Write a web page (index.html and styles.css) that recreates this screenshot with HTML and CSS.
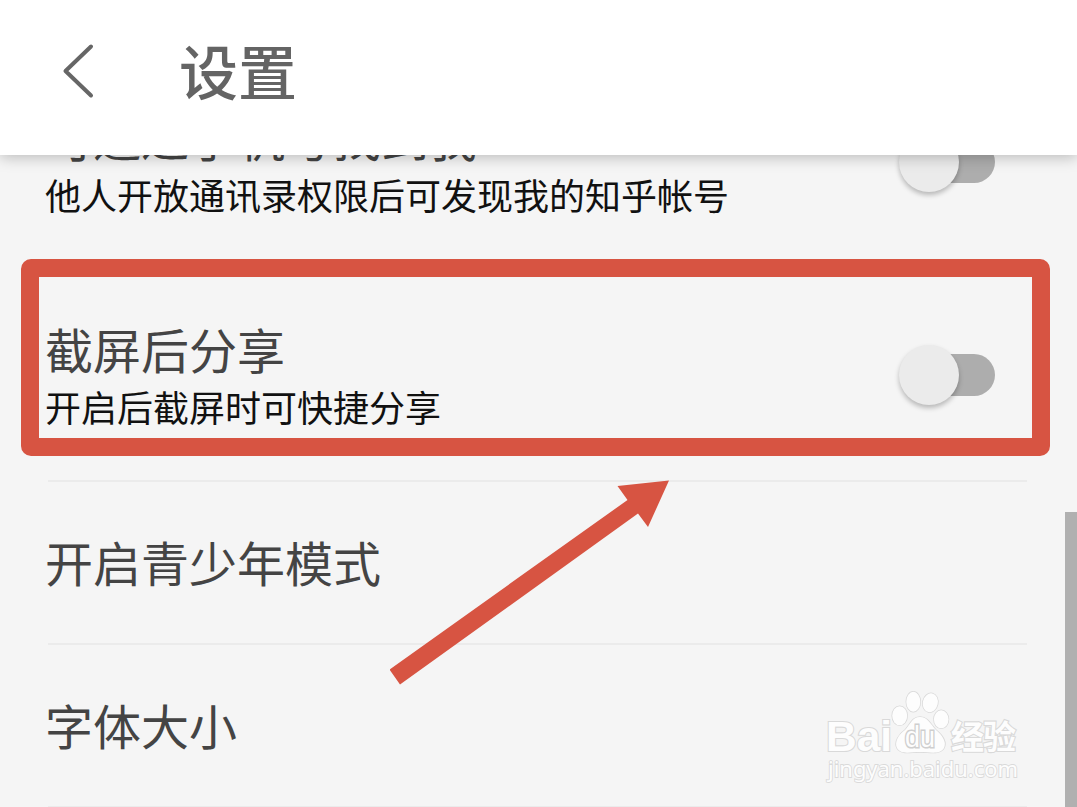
FILE: index.html
```
<!DOCTYPE html>
<html lang="zh-CN">
<head>
    <meta charset="UTF-8">
    <meta name="viewport" content="width=device-width, initial-scale=1.0">
    <title>设置</title>
    <link rel="stylesheet" href="styles.css">
</head>
<body>
    <header class="header">
        <svg class="back" width="32" height="56" viewBox="0 0 32 56">
            <path d="M29 3.500 L3.500 28 L29 52.500" />
        </svg>
        <h1>设置</h1>
    </header>

    <main class="content">
        <ul class="settings">
            <li class="row row-tall">
                <div class="text">
                    <p class="title">可通过手机号找到我</p>
                    <p class="desc">他人开放通讯录权限后可发现我的知乎帐号</p>
                </div>
                <span class="switch"><span class="thumb"></span></span>
            </li>
            <li class="row row-tall">
                <div class="text">
                    <p class="title">截屏后分享</p>
                    <p class="desc">开启后截屏时可快捷分享</p>
                </div>
                <span class="switch"><span class="thumb"></span></span>
            </li>
            <li class="row">
                <p class="title">开启青少年模式</p>
            </li>
            <li class="row">
                <p class="title">字体大小</p>
            </li>
        </ul>
    </main>

    <div class="scrollbar"></div>
    <div class="highlight"></div>

    <svg class="arrow" width="280" height="206" viewBox="0 0 280 206">
        <path d="M-0.500 189.500 L237.500 20 L227.500 6 L279 0.500 L258 47 L248 33.500 L10 204.500 Z" />
    </svg>

    <svg class="watermark" width="210" height="110" viewBox="0 0 210 110">
        <g class="paw">
            <ellipse cx="79.700" cy="35.700" rx="7.500" ry="9.500" />
            <ellipse cx="93.300" cy="21.800" rx="7" ry="10" />
            <ellipse cx="110.300" cy="22.800" rx="7.500" ry="9.500" transform="rotate(12 110.300 22.800)" />
            <ellipse cx="121.200" cy="39.300" rx="7.300" ry="9" />
            <path d="M100 37 C108 37 111 45 116 50 C122 55 127 62 124 68 C120 75 110 72 100 72 C90 72 81 75 77 68 C74 62 79 54 85 50 C90 45 92 37 100 37 Z" />
        </g>
        <text class="brand" x="6" y="71" textLength="66" lengthAdjust="spacingAndGlyphs">Bai</text>
        <text class="du" x="85" y="67" textLength="30" lengthAdjust="spacingAndGlyphs">du</text>
        <text class="brand-cn" x="131" y="69" textLength="65">经验</text>
        <text class="site" x="8" y="97" textLength="190" lengthAdjust="spacingAndGlyphs">jingyan.baidu.com</text>
    </svg>
</body>
</html>
```
FILE: styles.css
```
* {
    box-sizing: border-box;
}
body {
    margin: 0;
    height: 807px;
    display: flex;
    flex-direction: column;
    position: relative;
    overflow: hidden;
    background-color: #f5f5f5;
    font-family: "Noto Sans CJK SC", sans-serif;
}
h1, p, ul {
    margin: 0;
    padding: 0;
}
.header {
    flex: none;
    height: 155px;
    display: flex;
    align-items: flex-start;
    gap: 85px;
    padding: 43px 0 0 62px;
    background-color: #fff;
    box-shadow: 0 2px 14px rgba(0, 0, 0, 0.25);
    z-index: 1;
}
.back {
    fill: none;
    stroke: #666;
    stroke-width: 4;
    stroke-linecap: round;
    stroke-linejoin: round;
}
.header h1 {
    margin-top: -3px;
    font-size: 59px;
    font-weight: 500;
    line-height: 60px;
    color: #646464;
}
.content {
    flex: 1;
    min-height: 0;
}
.settings {
    margin-top: -98px;
    list-style: none;
}
.row {
    height: 163px;
    margin: 0 50px 0 48px;
    padding-bottom: 4px;
    border-bottom: 2px solid #ebebeb;
    display: flex;
    align-items: center;
    justify-content: space-between;
}
.row-tall {
    height: 213px;
    padding-right: 32px;
    padding-bottom: 0;
}
.row-tall:first-child {
    height: 212px;
}
.text {
    padding-bottom: 2px;
}
.title {
    margin-left: -3px;
    font-size: 48px;
    line-height: 64px;
    color: #444;
}
.text .title {
    line-height: 62px;
    margin-bottom: 3px;
}
.desc {
    margin-left: -3px;
    font-size: 36px;
    line-height: 48px;
    color: #111;
}
.switch {
    width: 84px;
    height: 42px;
    border-radius: 21px;
    background-color: #adadad;
    display: flex;
    align-items: center;
}
.thumb {
    flex: none;
    width: 60px;
    height: 60px;
    margin-left: -12px;
    border-radius: 50%;
    background-color: #ebebeb;
    box-shadow: 0 3px 5px rgba(0, 0, 0, 0.25);
}
.scrollbar {
    position: absolute;
    right: 0;
    top: 512px;
    width: 12px;
    height: 295px;
    background-color: #b0b0b0;
}
.highlight {
    position: absolute;
    left: 21px;
    top: 259px;
    width: 1029px;
    height: 197px;
    border: 18px solid #d75442;
    border-radius: 10px;
}
.arrow {
    position: absolute;
    left: 390px;
    top: 480px;
    fill: #d75442;
}
.watermark {
    position: absolute;
    left: 820px;
    top: 680px;
    fill: #fdfdfd;
    stroke: #d9d9d9;
    stroke-width: 1.5;
    paint-order: stroke;
}
.watermark text {
    stroke-width: 2.2;
}
.brand {
    font: bold 43px "Liberation Sans", sans-serif;
}
.watermark .du {
    font: 30px "Liberation Sans", sans-serif;
    stroke: #cfcfcf;
    stroke-width: 3;
}
.brand-cn {
    font: bold 33px "Noto Sans CJK SC", sans-serif;
}
.watermark .site {
    font: 22px "Noto Sans", sans-serif;
    stroke: #dadada;
    stroke-width: 1.8;
}
```
